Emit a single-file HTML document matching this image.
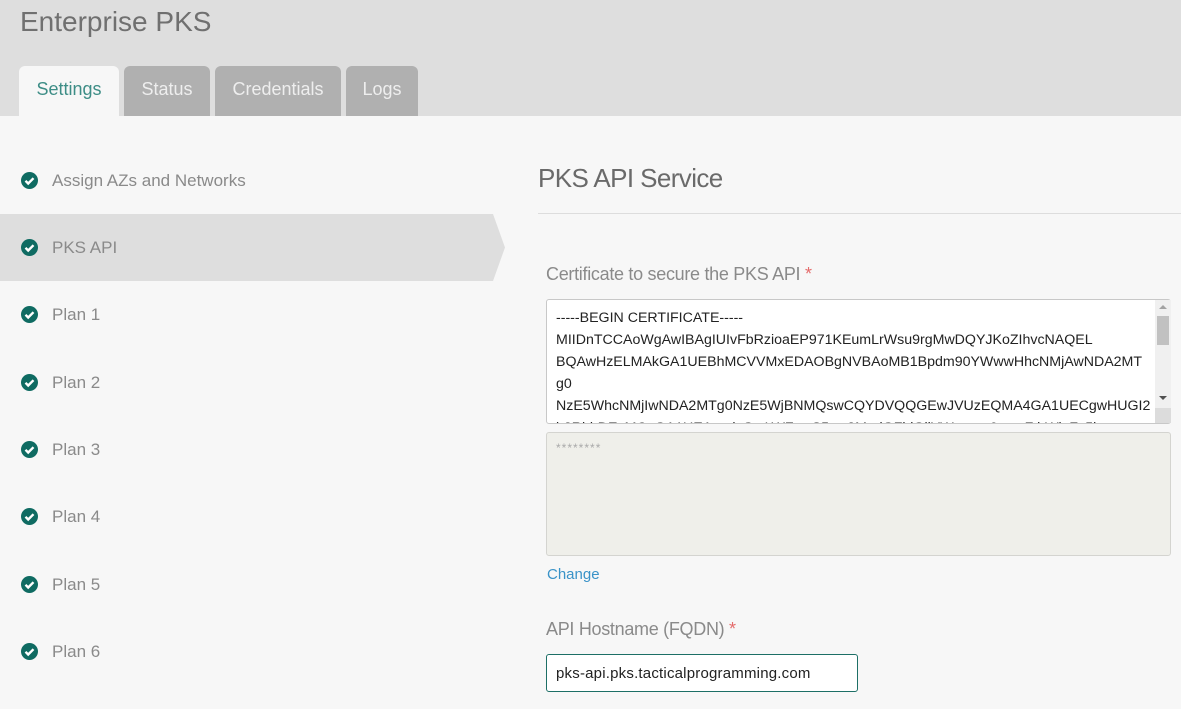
<!DOCTYPE html>
<html><head><meta charset="utf-8"><style>
*{margin:0;padding:0;box-sizing:border-box}
body{width:1181px;height:709px;overflow:hidden;background:#f7f7f7;font-family:"Liberation Sans",sans-serif;position:relative}
.abs{position:absolute}
.hdr{left:0;top:0;width:1181px;height:116px;background:#dedede}
.title{left:20px;top:6px;font-size:28px;color:#707070;letter-spacing:0px}
.tab{top:66px;height:50px;border-radius:6px 6px 0 0;background:#b0b0b0;color:#eee;font-size:18px;text-align:center;line-height:47px}
.item{left:0;width:493px;height:67px;font-size:17px;color:#8a8a8a;line-height:67px;padding-left:52px}
.chk{position:absolute;left:21px;top:25px;width:17px;height:17px;border-radius:50%;background:#0f6b62}
.chk svg{position:absolute;left:0;top:0}
.ta{border:1px solid #c8c8c8;border-radius:3px}
.cert{font-size:14.2px;line-height:22px;color:#222;letter-spacing:0px;white-space:pre;overflow:hidden}
</style></head><body>
<div class="abs hdr"></div>
<div class="abs title">Enterprise PKS</div>
<div class="abs tab" style="left:19px;width:100px;background:#f7f7f7;color:#3d8d86">Settings</div>
<div class="abs tab" style="left:124px;width:86px">Status</div>
<div class="abs tab" style="left:215px;width:126px">Credentials</div>
<div class="abs tab" style="left:346px;width:72px">Logs</div>

<svg class="abs" style="left:0;top:214px" width="510" height="67"><polygon points="0,0 493,0 505,33.5 493,67 0,67" fill="#dedede"/></svg>

<div class="abs item" style="top:147px"><span class="chk"><svg width="17" height="17"><path d="M4.5 8.8l2.7 2.7 5.3-5.3" stroke="#fff" stroke-width="2.4" fill="none"/></svg></span>Assign AZs and Networks</div>
<div class="abs item" style="top:214px"><span class="chk"><svg width="17" height="17"><path d="M4.5 8.8l2.7 2.7 5.3-5.3" stroke="#fff" stroke-width="2.4" fill="none"/></svg></span>PKS API</div>
<div class="abs item" style="top:281px"><span class="chk"><svg width="17" height="17"><path d="M4.5 8.8l2.7 2.7 5.3-5.3" stroke="#fff" stroke-width="2.4" fill="none"/></svg></span>Plan 1</div>
<div class="abs item" style="top:349px"><span class="chk"><svg width="17" height="17"><path d="M4.5 8.8l2.7 2.7 5.3-5.3" stroke="#fff" stroke-width="2.4" fill="none"/></svg></span>Plan 2</div>
<div class="abs item" style="top:416px"><span class="chk"><svg width="17" height="17"><path d="M4.5 8.8l2.7 2.7 5.3-5.3" stroke="#fff" stroke-width="2.4" fill="none"/></svg></span>Plan 3</div>
<div class="abs item" style="top:483px"><span class="chk"><svg width="17" height="17"><path d="M4.5 8.8l2.7 2.7 5.3-5.3" stroke="#fff" stroke-width="2.4" fill="none"/></svg></span>Plan 4</div>
<div class="abs item" style="top:551px"><span class="chk"><svg width="17" height="17"><path d="M4.5 8.8l2.7 2.7 5.3-5.3" stroke="#fff" stroke-width="2.4" fill="none"/></svg></span>Plan 5</div>
<div class="abs item" style="top:618px"><span class="chk"><svg width="17" height="17"><path d="M4.5 8.8l2.7 2.7 5.3-5.3" stroke="#fff" stroke-width="2.4" fill="none"/></svg></span>Plan 6</div>

<div class="abs" style="left:538px;top:163px;font-size:26px;color:#6a6a6a;letter-spacing:-0.6px">PKS API Service</div>
<div class="abs" style="left:538px;top:213px;width:643px;height:1px;background:#ddd"></div>
<div class="abs" style="left:546px;top:264px;font-size:18px;color:#8a8a8a;letter-spacing:-0.3px">Certificate to secure the PKS API <span style="color:#e46b6b">*</span></div>

<div class="abs ta" style="left:546px;top:299px;width:625px;height:125px;background:#fff">
<div class="abs cert" style="left:9px;top:7px;width:598px;height:116px">-----BEGIN CERTIFICATE-----
MIIDnTCCAoWgAwIBAgIUIvFbRzioaEP971KEumLrWsu9rgMwDQYJKoZIhvcNAQEL
BQAwHzELMAkGA1UEBhMCVVMxEDAOBgNVBAoMB1Bpdm90YWwwHhcNMjAwNDA2MT
g0
NzE5WhcNMjIwNDA2MTg0NzE5WjBNMQswCQYDVQQGEwJVUzEQMA4GA1UECgwHUGI2
b3RhbDEsMCoGA1UEAwwjcGtzLWFwaS5wa3MudGFjdGljYWxwcm9ncmFtbWluZy5j</div>
<div class="abs" style="left:608px;top:0;width:16px;height:123px;background:#f0f0f0"></div>
<div class="abs" style="left:610px;top:16px;width:12px;height:29px;background:#c1c1c1"></div>
<div class="abs" style="left:612px;top:5px;width:0;height:0;border:4px solid transparent;border-bottom-color:#a3a3a3;border-top:0"></div>
<div class="abs" style="left:612px;top:96px;width:0;height:0;border:4px solid transparent;border-top-color:#505050;border-bottom:0"></div>
<div class="abs" style="left:608px;top:108px;width:16px;height:15px;background:#dcdcdc"></div>
</div>

<div class="abs ta" style="left:546px;top:432px;width:625px;height:124px;background:#efefea;border-color:#d4d4d0">
<div class="abs" style="left:9px;top:8px;font-size:12px;color:#aaa;letter-spacing:1px">********</div>
</div>
<div class="abs" style="left:547px;top:566px;font-size:15px;color:#3a93c8">Change</div>

<div class="abs" style="left:546px;top:619px;font-size:18px;color:#8a8a8a;letter-spacing:-0.3px">API Hostname (FQDN) <span style="color:#e46b6b">*</span></div>
<div class="abs" style="left:546px;top:654px;width:312px;height:38px;border:1px solid #1d6f66;border-radius:3px;background:#fff;font-size:15px;color:#222;line-height:37px;padding-left:9px;letter-spacing:0.2px">pks-api.pks.tacticalprogramming.com</div>
</body></html>
